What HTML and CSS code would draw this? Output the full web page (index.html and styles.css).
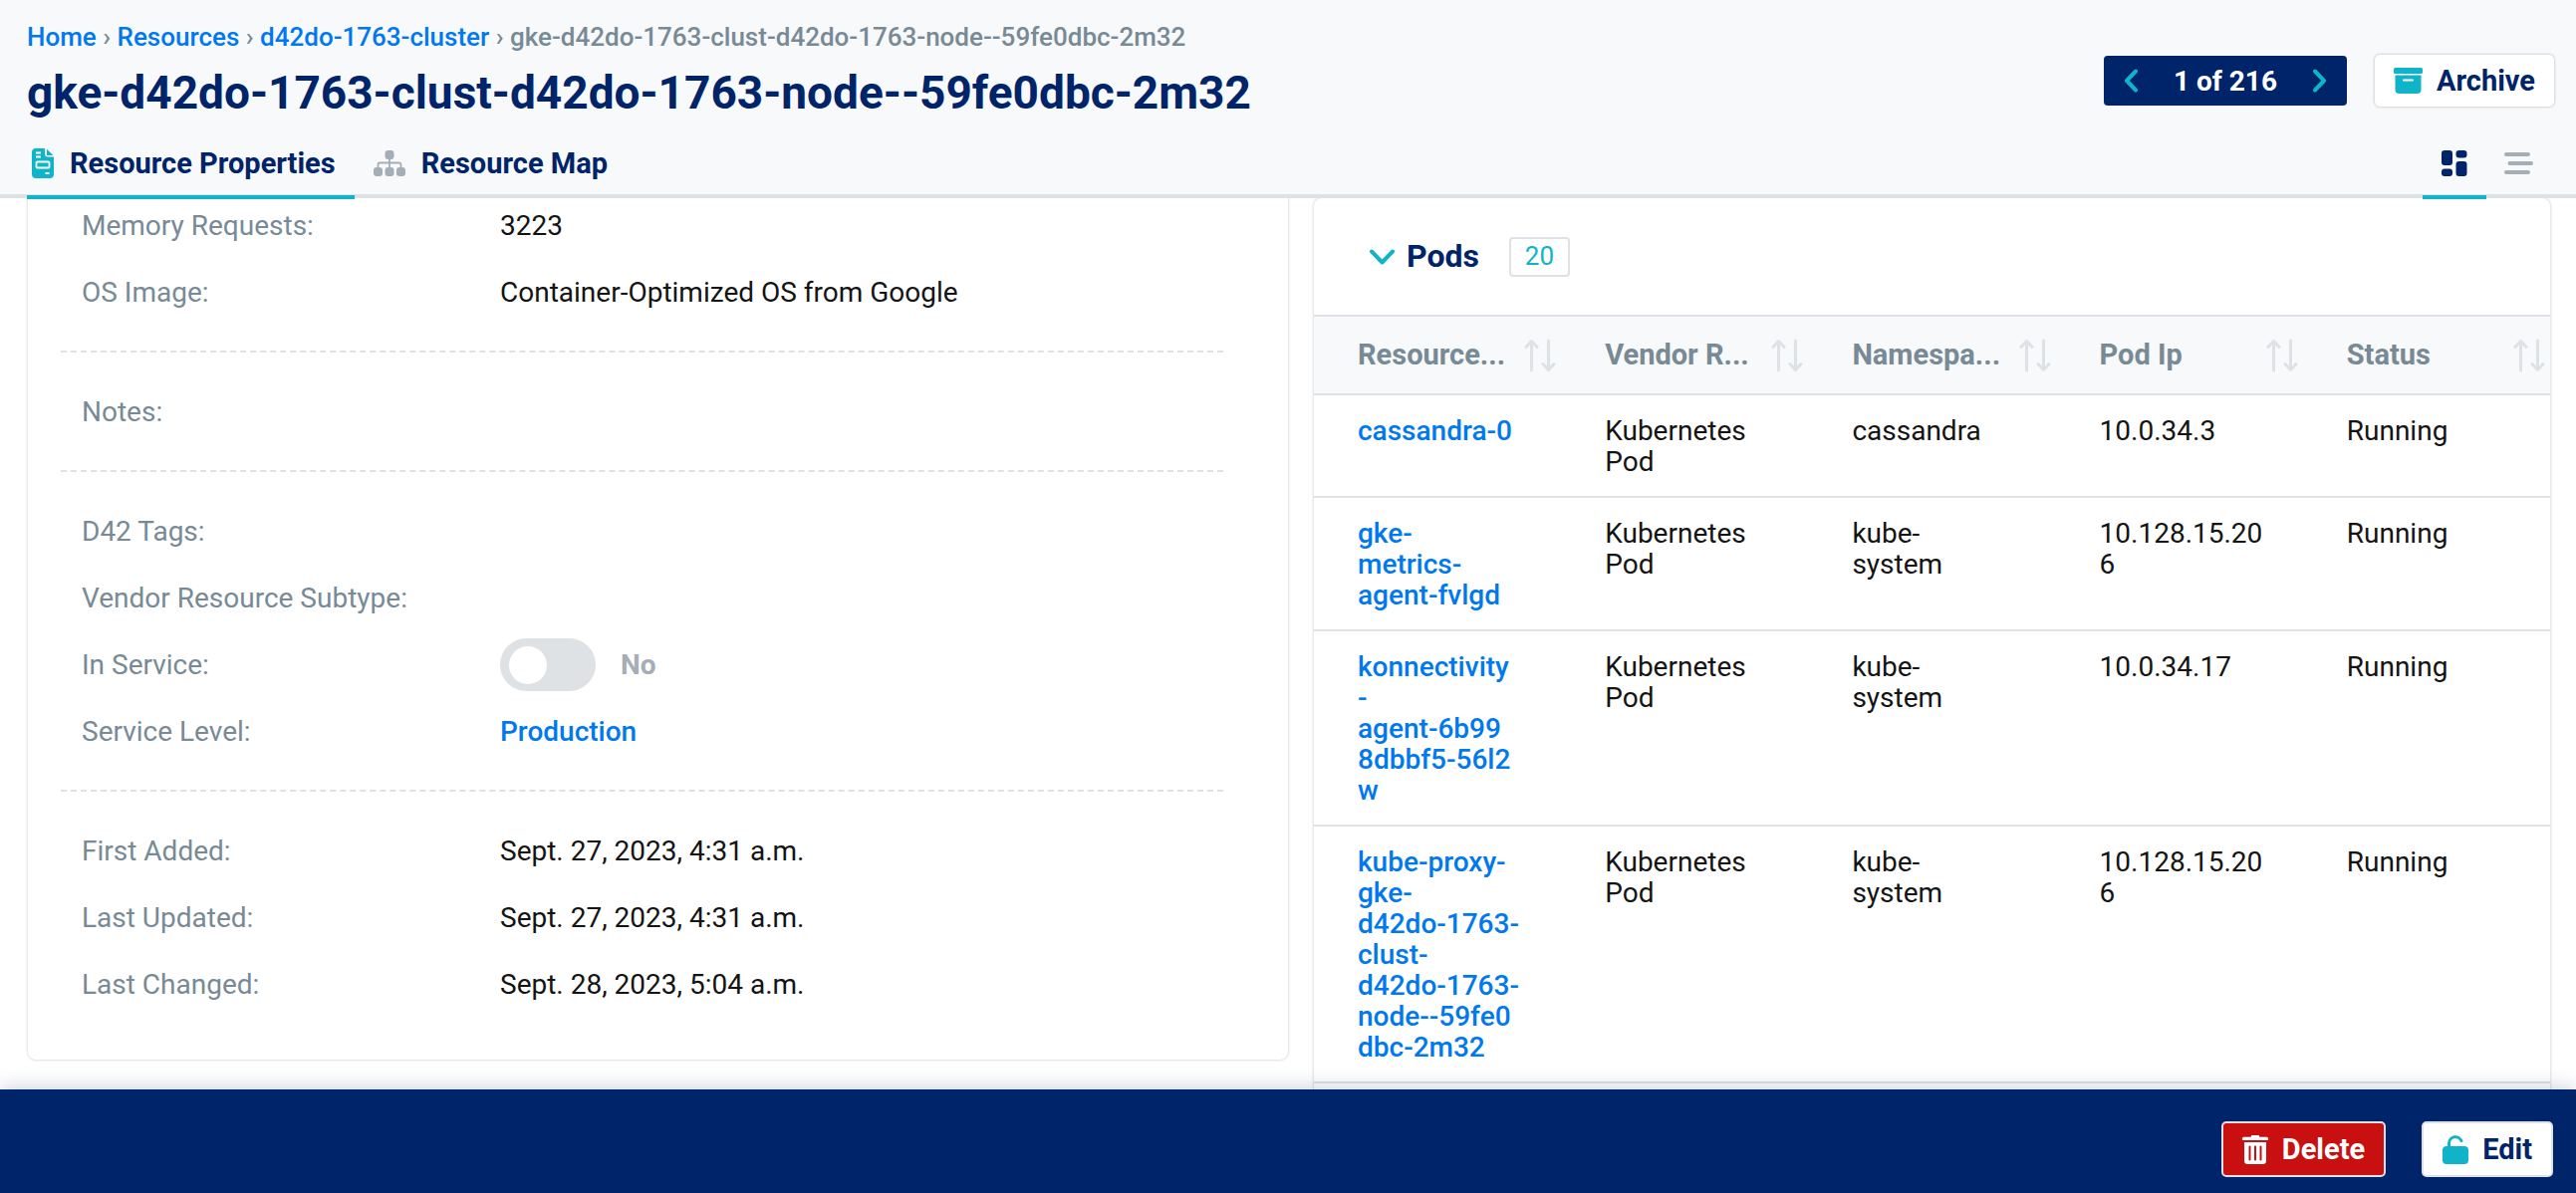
FILE: index.html
```html
<!DOCTYPE html>
<html lang="en">
<head>
<meta charset="utf-8">
<meta name="viewport" content="width=device-width, initial-scale=1">
<title>gke-d42do-1763-clust-d42do-1763-node--59fe0dbc-2m32</title>
<link rel="stylesheet" href="styles.css">
</head>
<body>
<svg class="defs" aria-hidden="true">
  <symbol id="sort" viewBox="0 0 32 34">
    <path d="M7.500 32V3M2 8.500 7.500 2.500 13 8.500M24.500 2v29M19 25.500l5.500 6 5.500-6" fill="none" stroke="currentColor" stroke-width="3" stroke-linecap="round" stroke-linejoin="round"/>
  </symbol>
</svg>

<header class="page-head">
  <div class="head-top">
    <div class="head-title">
      <nav class="crumbs" aria-label="Breadcrumb">
        <a href="#">Home</a> › <a href="#">Resources</a> › <a href="#">d42do-1763-cluster</a> › <span>gke-d42do-1763-clust-d42do-1763-node--59fe0dbc-2m32</span>
      </nav>
      <h1>gke-d42do-1763-clust-d42do-1763-node--59fe0dbc-2m32</h1>
    </div>
    <div class="head-actions">
      <div class="pager">
        <button type="button" aria-label="Previous"><svg width="14" height="24" viewBox="0 0 14 24"><path d="M12 2.500 3 12 12 21.500" fill="none" stroke="currentColor" stroke-width="4" stroke-linecap="round" stroke-linejoin="round"/></svg></button>
        <span>1 of 216</span>
        <button type="button" aria-label="Next"><svg width="14" height="24" viewBox="0 0 14 24"><path d="M2 2.500l9 9.500L2 21.500" fill="none" stroke="currentColor" stroke-width="4" stroke-linecap="round" stroke-linejoin="round"/></svg></button>
      </div>
      <button type="button" class="btn btn-archive">
        <svg width="29" height="26" viewBox="0 0 29 26" fill="currentColor"><rect width="29" height="6" rx="1.500"/><path d="M1.500 7.500h26V22a4 4 0 0 1-4 4h-18a4 4 0 0 1-4-4z"/><path d="M10 12.500h9" stroke="#fff" stroke-width="2" stroke-linecap="round"/></svg>
        Archive
      </button>
    </div>
  </div>
  <div class="tab-bar">
    <nav class="tabs">
      <a href="#" class="tab active" aria-current="page">
        <svg class="teal" width="22" height="30" viewBox="0 0 22 30"><path d="M4 0h9v5.500A3 3 0 0 0 16 8.500h6V26a4 4 0 0 1-4 4H4a4 4 0 0 1-4-4V4a4 4 0 0 1 4-4z" fill="currentColor"/><path d="M15 .8 21.500 7H15z" fill="currentColor"/><path d="M4 4.500h5M4 8.500h5M13.500 25h4" stroke="#fff" stroke-width="1.800"/><rect x="4.500" y="13.500" width="13" height="6" rx="1" fill="none" stroke="#fff" stroke-width="1.800"/></svg>
        Resource Properties
      </a>
      <a href="#" class="tab">
        <svg class="gray" width="32" height="26" viewBox="0 0 32 26"><g fill="currentColor"><rect x="11.500" width="9" height="9" rx="3"/><rect y="17" width="9" height="9" rx="3"/><rect x="11.500" y="17" width="9" height="9" rx="3"/><rect x="23" y="17" width="9" height="9" rx="3"/></g><path d="M16 8v10M4.500 18v-3.500a2 2 0 0 1 2-2h19a2 2 0 0 1 2 2V18" fill="none" stroke="currentColor" stroke-width="1.800"/></svg>
        Resource Map
      </a>
    </nav>
    <div class="views">
      <button type="button" class="view active" aria-label="Card view"><svg width="26" height="26" viewBox="0 0 26 26" fill="currentColor"><rect width="11" height="15" rx="3"/><rect y="18.500" width="11" height="7.500" rx="3"/><rect x="14.500" width="11" height="7.500" rx="3"/><rect x="14.500" y="11" width="11" height="15" rx="3"/></svg></button>
      <button type="button" class="view" aria-label="List view"><svg width="29" height="22" viewBox="0 0 29 22"><path d="M2 2h22M5.500 11H27M2 20h22" stroke="currentColor" stroke-width="4" stroke-linecap="round"/></svg></button>
    </div>
  </div>
</header>

<main class="content">
  <section class="card properties">
    <dl class="group">
      <div class="row"><dt>Memory Requests:</dt><dd>3223</dd></div>
      <div class="row"><dt>OS Image:</dt><dd>Container-Optimized OS from Google</dd></div>
    </dl>
    <dl class="group">
      <div class="row"><dt>Notes:</dt><dd></dd></div>
    </dl>
    <dl class="group">
      <div class="row"><dt>D42 Tags:</dt><dd></dd></div>
      <div class="row"><dt>Vendor Resource Subtype:</dt><dd></dd></div>
      <div class="row"><dt><label for="in-service">In Service:</label></dt><dd class="switch-cell"><input type="checkbox" id="in-service" class="switch"><span>No</span></dd></div>
      <div class="row"><dt>Service Level:</dt><dd><a href="#">Production</a></dd></div>
    </dl>
    <dl class="group">
      <div class="row"><dt>First Added:</dt><dd>Sept. 27, 2023, 4:31 a.m.</dd></div>
      <div class="row"><dt>Last Updated:</dt><dd>Sept. 27, 2023, 4:31 a.m.</dd></div>
      <div class="row"><dt>Last Changed:</dt><dd>Sept. 28, 2023, 5:04 a.m.</dd></div>
    </dl>
  </section>

  <section class="card pods">
    <div class="pods-head">
      <button type="button" class="collapse" aria-expanded="true">
        <svg width="25" height="16" viewBox="0 0 25 16"><path d="M2 2.500 12.500 13.500 23 2.500" fill="none" stroke="currentColor" stroke-width="4" stroke-linecap="round" stroke-linejoin="round"/></svg>
        <span>Pods</span>
      </button>
      <span class="count">20</span>
    </div>
    <table>
      <thead>
        <tr>
          <th><div><span>Resource...</span><svg><use href="#sort"/></svg></div></th>
          <th><div><span>Vendor R...</span><svg><use href="#sort"/></svg></div></th>
          <th><div><span>Namespa...</span><svg><use href="#sort"/></svg></div></th>
          <th><div><span>Pod Ip</span><svg><use href="#sort"/></svg></div></th>
          <th><div><span>Status</span><svg><use href="#sort"/></svg></div></th>
        </tr>
      </thead>
      <tbody>
        <tr><td><a href="#">cassandra-0</a></td><td>Kubernetes<br>Pod</td><td>cassandra</td><td>10.0.34.3</td><td>Running</td></tr>
        <tr><td><a href="#">gke-<br>metrics-<br>agent-fvlgd</a></td><td>Kubernetes<br>Pod</td><td>kube-<br>system</td><td>10.128.15.20<br>6</td><td>Running</td></tr>
        <tr><td><a href="#">konnectivity<br>-<br>agent-6b99<br>8dbbf5-56l2<br>w</a></td><td>Kubernetes<br>Pod</td><td>kube-<br>system</td><td>10.0.34.17</td><td>Running</td></tr>
        <tr><td><a href="#">kube-proxy-<br>gke-<br>d42do-1763-<br>clust-<br>d42do-1763-<br>node--59fe0<br>dbc-2m32</a></td><td>Kubernetes<br>Pod</td><td>kube-<br>system</td><td>10.128.15.20<br>6</td><td>Running</td></tr>
      </tbody>
    </table>
  </section>
</main>

<footer class="action-bar">
  <button type="button" class="btn btn-delete">
    <svg width="26" height="29" viewBox="0 0 26 29" fill="currentColor"><path d="M8.500 1.800 9.500 0h7l1 1.800H24.500a1.500 1.500 0 0 1 1.500 1.500V5H0V3.300a1.500 1.500 0 0 1 1.500-1.500z"/><path d="M2 7h22v18.500a3.500 3.500 0 0 1-3.500 3.500h-15A3.500 3.500 0 0 1 2 25.500z"/><path d="M7.500 11.500v13M13 11.500v13M18.500 11.500v13" stroke="#c81010" stroke-width="2" stroke-linecap="round"/></svg>
    Delete
  </button>
  <button type="button" class="btn btn-edit">
    <svg width="26" height="29" viewBox="0 0 26 29"><rect y="11" width="26" height="18" rx="4" fill="currentColor"/><path d="M6.500 12V8a6.500 6.500 0 0 1 12.500-2.300" fill="none" stroke="currentColor" stroke-width="3" stroke-linecap="round"/></svg>
    Edit
  </button>
</footer>
</body>
</html>
```
FILE: styles.css
```css
:root {
  --navy: #002469;
  --teal: #10b4c8;
  --blue: #0078f0;
  --slate: #778a96;
  --gray: #a5adb6;
  --line: #dee1e6;
  --pale: #f8f9fb;
  --ink: #141414;
}

* { box-sizing: border-box; }

body {
  margin: 0;
  height: 100vh;
  display: flex;
  flex-direction: column;
  background: #fff;
  color: var(--ink);
  font: 28px/31px Roboto, sans-serif;
}

h1, dl, dd { margin: 0; }
a { color: var(--blue); font-weight: 500; text-decoration: none; }
button { font: inherit; border: 0; padding: 0; background: none; cursor: pointer; }
svg { display: block; flex: none; }
.defs { position: absolute; width: 0; height: 0; }
.teal { color: var(--teal); }
.gray { color: var(--gray); }

.page-head {
  position: relative;
  z-index: 1;
  padding: 20px 22px 0 27px;
  background: var(--pale);
  border-bottom: 4px solid var(--line);
}
.head-top { display: flex; justify-content: space-between; }
.crumbs { font-size: 26px; line-height: 34px; font-weight: 500; color: var(--slate); }
h1 {
  margin-top: 10px;
  font-size: 46px;
  line-height: 58px;
  font-weight: 700;
  color: var(--navy);
}
.head-actions { display: flex; align-items: center; gap: 28px; padding-top: 20px; }
.pager {
  display: flex;
  align-items: center;
  justify-content: space-between;
  width: 244px;
  height: 50px;
  padding: 0 20px;
  border-radius: 4px;
  background: var(--navy);
  color: #fff;
  font-weight: 700;
}
.pager button { color: var(--teal); }

.btn {
  display: flex;
  align-items: center;
  gap: 14px;
  height: 56px;
  padding: 0 19px;
  border: 2px solid var(--line);
  border-radius: 5px;
  background: #fff;
  color: var(--navy);
  font-size: 29px;
  font-weight: 700;
}
.btn svg { color: var(--teal); }
.btn-archive { height: 52px; border: 0; box-shadow: 0 0 3px rgba(0, 0, 0, .3); }

.tab-bar { display: flex; justify-content: space-between; margin: 14px 0 -5px; }
.tabs, .views { display: flex; }
.tab, .view {
  display: flex;
  align-items: center;
  height: 64px;
  padding-bottom: 4px;
  border-bottom: 4px solid transparent;
  color: var(--navy);
  font-size: 29px;
  font-weight: 700;
}
.tab { gap: 16px; padding-left: 5px; padding-right: 19px; }
.tab + .tab { padding-left: 19px; }
.tab.active, .view.active { border-bottom-color: var(--teal); }
.view { justify-content: center; width: 64px; color: var(--gray); }
.view.active { color: var(--navy); }
.views { padding-right: 4px; }

.content {
  flex: 1;
  min-height: 0;
  display: grid;
  grid-template-columns: 1265fr 1241fr;
  gap: 26px;
  align-items: start;
  padding: 0 26px 0 28px;
  overflow: hidden;
}
.card { border-radius: 8px; box-shadow: 0 0 3px rgba(0, 0, 0, .25); background: #fff; }

.properties { margin-top: -6px; padding: 0 65px 42px 33px; }
.group + .group { margin-top: 25px; padding-top: 26px; border-top: 2px dashed var(--line); }
.row { display: flex; align-items: center; height: 67px; padding-left: 21px; }
dt { width: 420px; color: var(--slate); }
.switch-cell { display: flex; align-items: center; gap: 25px; color: var(--gray); font-weight: 700; }
.switch {
  appearance: none;
  display: flex;
  align-items: center;
  width: 96px;
  height: 53px;
  margin: 0;
  padding-left: 9px;
  border-radius: 27px;
  background: #dee2e5;
}
.switch::before { content: ""; width: 38px; height: 38px; border-radius: 50%; background: #fff; }
.switch:checked { justify-content: flex-end; padding: 0 9px 0 0; background: var(--teal); }

.pods { padding-bottom: 40px; }
.pods-head { display: flex; align-items: center; gap: 30px; height: 117px; padding: 0 56px; }
.collapse {
  display: flex;
  align-items: center;
  gap: 12px;
  color: var(--teal);
  font-size: 32px;
  font-weight: 700;
}
.collapse span { color: var(--navy); }
.count {
  display: grid;
  place-items: center;
  width: 61px;
  height: 40px;
  border: 2px solid var(--line);
  border-radius: 4px;
  color: var(--teal);
  font-size: 26px;
}

table { width: 100%; table-layout: fixed; border-collapse: separate; border-spacing: 0; }
th {
  height: 81px;
  padding: 0 5px 0 44px;
  border: solid var(--line);
  border-width: 2px 0;
  background: var(--pale);
  color: var(--slate);
  font-size: 29px;
  text-align: left;
}
th div { display: flex; align-items: center; justify-content: space-between; }
th svg { width: 32px; height: 34px; color: var(--line); }
td { padding: 20px 0 19px 44px; border-bottom: 2px solid var(--line); vertical-align: top; white-space: nowrap; }

.action-bar {
  position: relative;
  display: flex;
  justify-content: flex-end;
  gap: 36px;
  height: 104px;
  padding: 32px 23px 0;
  background: var(--navy);
  box-shadow: 0 0 20px rgba(0, 36, 105, .25);
}
.btn-delete { background: #c81010; color: #fff; }
.btn-delete svg { color: #fff; }
```
